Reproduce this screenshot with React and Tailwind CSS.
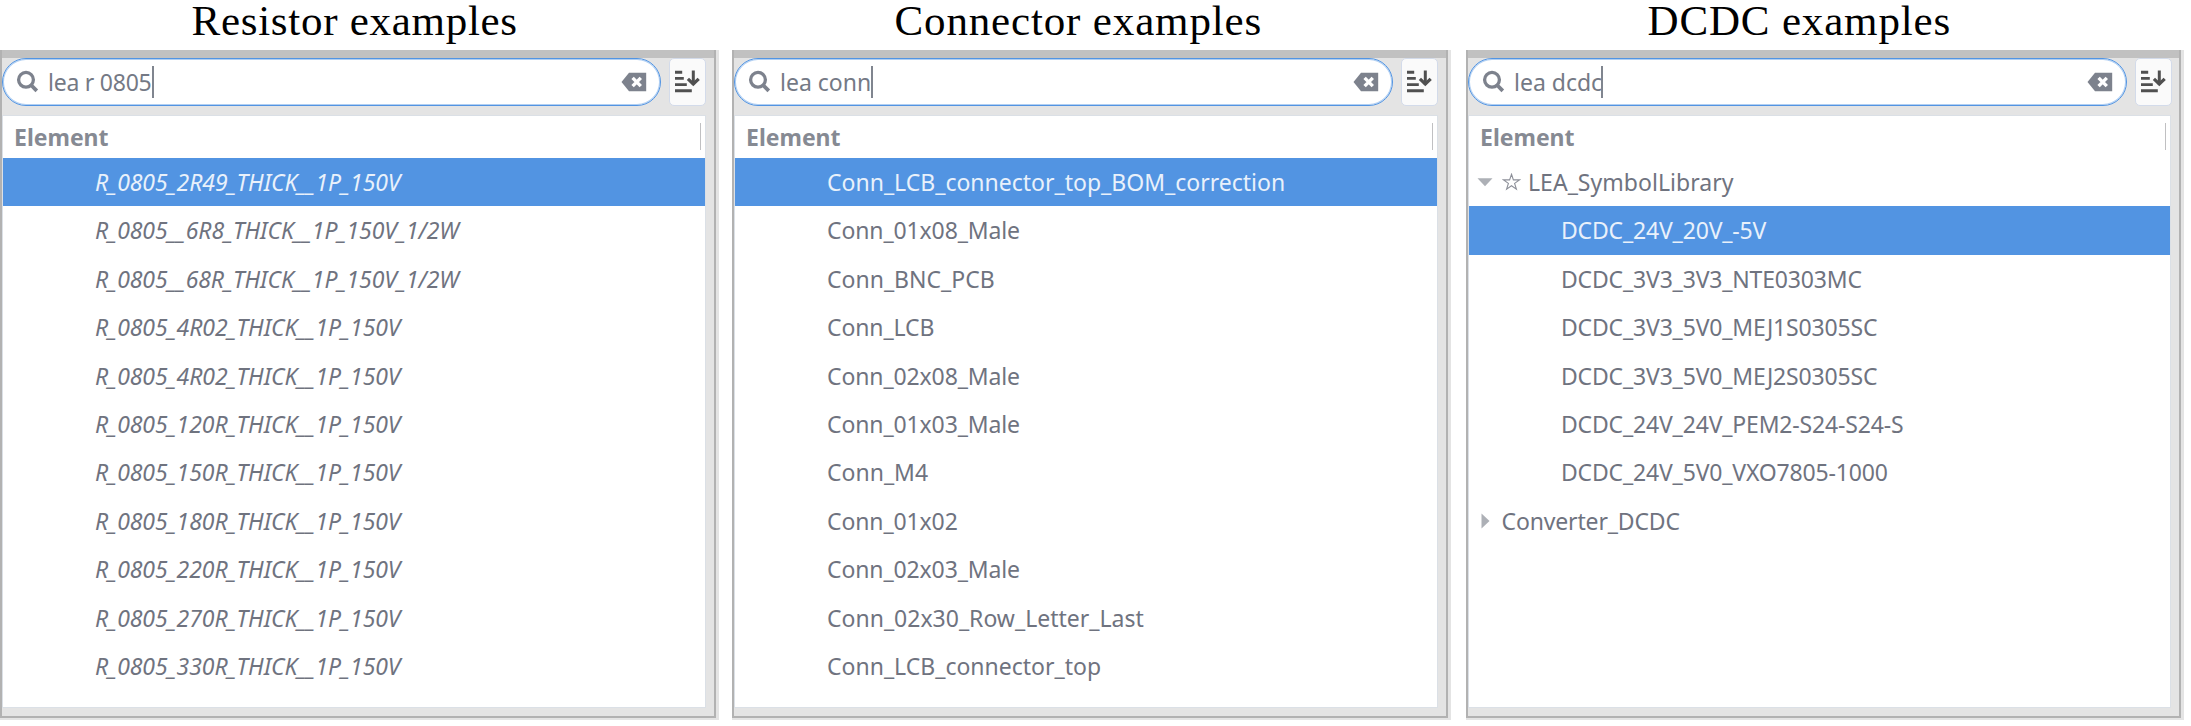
const panels = [
  {
    title: "Resistor examples",
    column: "w-[732px]",
    heading: "pl-[191.5px] tracking-[0.72px]",
    frame: "w-[719px]",
    query: "lea r 0805",
    queryClass: "tracking-[-0.24px]",
    caret: "left-[152px]",
    rows: [
      { text: "R_0805_2R49_THICK__1P_150V", selected: true },
      { text: "R_0805__6R8_THICK__1P_150V_1/2W" },
      { text: "R_0805__68R_THICK__1P_150V_1/2W" },
      { text: "R_0805_4R02_THICK__1P_150V" },
      { text: "R_0805_4R02_THICK__1P_150V" },
      { text: "R_0805_120R_THICK__1P_150V" },
      { text: "R_0805_150R_THICK__1P_150V" },
      { text: "R_0805_180R_THICK__1P_150V" },
      { text: "R_0805_220R_THICK__1P_150V" },
      { text: "R_0805_270R_THICK__1P_150V" },
      { text: "R_0805_330R_THICK__1P_150V" },
    ],
    rowClass: "italic tracking-[-0.06px]",
  },
  {
    title: "Connector examples",
    column: "w-[734px]",
    heading: "pl-[162.5px] tracking-[0.85px]",
    frame: "w-[719px]",
    query: "lea conn",
    queryClass: "",
    caret: "left-[139px]",
    rows: [
      { text: "Conn_LCB_connector_top_BOM_correction", selected: true },
      { text: "Conn_01x08_Male", tight: true },
      { text: "Conn_BNC_PCB" },
      { text: "Conn_LCB", tight: true },
      { text: "Conn_02x08_Male", tight: true },
      { text: "Conn_01x03_Male", tight: true },
      { text: "Conn_M4" },
      { text: "Conn_01x02", tight: true },
      { text: "Conn_02x03_Male", tight: true },
      { text: "Conn_02x30_Row_Letter_Last" },
      { text: "Conn_LCB_connector_top" },
    ],
    rowClass: "",
  },
  {
    title: "DCDC examples",
    column: "w-[725px]",
    heading: "pl-[181.5px] tracking-[0.84px]",
    frame: "w-[718px]",
    query: "lea dcdc",
    queryClass: "",
    caret: "left-[135px]",
    rows: [
      { text: "LEA_SymbolLibrary", kind: "open" },
      { text: "DCDC_24V_20V_-5V", selected: true },
      { text: "DCDC_3V3_3V3_NTE0303MC" },
      { text: "DCDC_3V3_5V0_MEJ1S0305SC" },
      { text: "DCDC_3V3_5V0_MEJ2S0305SC" },
      { text: "DCDC_24V_24V_PEM2-S24-S24-S" },
      { text: "DCDC_24V_5V0_VXO7805-1000" },
      { text: "Converter_DCDC", kind: "closed" },
    ],
    rowClass: "tracking-[-0.17px]",
  },
];

function SearchIcon() {
  return (
    <svg className="h-6 w-6 shrink-0" viewBox="0 0 24 24" fill="none" stroke="#7d828d">
      <circle cx="11" cy="9.8" r="7.4" strokeWidth="3.3" />
      <path d="M16 15 21.8 20.8" strokeWidth="3.8" />
    </svg>
  );
}

function ClearIcon() {
  return (
    <svg className="h-5 w-[26px] shrink-0" viewBox="0 0 26 20">
      <path d="M0.5 10 8 0.8H25.2V19.2H8Z" fill="#7d828d" />
      <path d="M11.6 5.9 19.8 14.1M19.8 5.9 11.6 14.1" stroke="#fff" strokeWidth="3.4" />
    </svg>
  );
}

function SortIcon() {
  return (
    <svg className="mr-[2px] h-6 w-[26px] shrink-0" viewBox="0 0 26 24" fill="none" stroke="#505050">
      <path d="M1 2.2H8.2M1 8.4H9.8M1 14.6H12.8M1 20.8H17.8" strokeWidth="2.9" />
      <path d="M19.3 0.5V14.5" strokeWidth="3" />
      <path d="M13.9 8.8 19.3 14 24.7 8.8" strokeWidth="3.2" />
    </svg>
  );
}

function Row({ row, className }) {
  if (row.kind === "open") {
    return (
      <div className="flex h-[48.4px] items-center pl-2 text-[#6f737f]">
        <svg className="h-4 w-4 shrink-0" viewBox="0 0 16 16">
          <path d="M0.5 4.3H15.5L8 12.2Z" fill="#adb0b6" />
        </svg>
        <svg className="ml-[9px] h-[18px] w-[19px] shrink-0" viewBox="0 0 19 18" fill="none" stroke="#8d9099">
          <path
            d="M9.5 1.3 11.4 6.9H17.4L12.6 10.4 14.4 16.2 9.5 12.7 4.6 16.2 6.4 10.4 1.6 6.9H7.6Z"
            strokeWidth="1.1"
          />
        </svg>
        <span className="ml-[7px] tracking-[0.03px]">{row.text}</span>
      </div>
    );
  }
  if (row.kind === "closed") {
    return (
      <div className="flex h-[48.4px] items-center pl-3 text-[#6f737f]">
        <svg className="h-4 w-[9px] shrink-0" viewBox="0 0 9 16">
          <path d="M0.5 0.5V15.5L8.5 8Z" fill="#adb0b6" />
        </svg>
        <span className="ml-[11.5px] tracking-[-0.15px]">{row.text}</span>
      </div>
    );
  }
  return (
    <div
      className={`flex h-[48.4px] items-center pl-[92px] ${className} ${
        row.tight ? "tracking-[-0.12px]" : ""
      } ${row.selected ? "bg-[#5294e2] text-[#e9f1fb]" : "text-[#6f737f]"}`}
    >
      {row.text}
    </div>
  );
}

function Panel({ panel }) {
  return (
    <section className={`shrink-0 ${panel.column}`}>
      <h2
        className={`h-[50px] font-['Liberation_Serif',serif] text-[43px] leading-[42px] text-black ${panel.heading}`}
      >
        {panel.title}
      </h2>
      <div className={`relative h-[670px] border-r-[3px] border-b-2 border-[#e4e4e4] ${panel.frame}`}>
        <div className="flex h-full flex-col border-x-2 border-b-2 border-[#b2b2b2] bg-[#e4e4e4]">
          <div className="h-2 shrink-0 bg-[#c1c1c1]" />
          <div className="flex h-12 shrink-0">
            <div className="flex w-[659px] items-center rounded-full border border-[#5294e2] bg-white pr-[13px] pl-3 text-[#747985] shadow-[inset_0_0_0_1px_rgba(82,148,226,0.45)]">
              <SearchIcon />
              <span className={`ml-[9px] flex-1 ${panel.queryClass}`}>{panel.query}</span>
              <ClearIcon />
            </div>
            <div className="ml-2 flex h-12 w-[37px] items-center justify-center rounded-[5px] border border-[#d3dbea] bg-[#fafafa]">
              <SortIcon />
            </div>
          </div>
          <div className={`absolute top-4 h-8 w-[2px] bg-[#80858f] ${panel.caret}`} />
          <div className="mt-[9px] mr-2 flex h-[593px] flex-col border border-[#dbe0e6] bg-white">
            <div className="flex h-[41.8px] shrink-0 items-center justify-between pr-1 pl-[11px] font-bold text-[#868a93]">
              <span>Element</span>
              <span className="h-[27px] w-px bg-[#c0c0c2]" />
            </div>
            {panel.rows.map((row, i) => (
              <Row key={i} row={row} className={panel.rowClass} />
            ))}
          </div>
        </div>
      </div>
    </section>
  );
}

export default function App() {
  return (
    <main className="flex h-[726px] w-[2191px] overflow-hidden bg-white font-['Noto_Sans',sans-serif] text-[23px] leading-[32px] whitespace-nowrap">
      {panels.map((panel) => (
        <Panel key={panel.title} panel={panel} />
      ))}
    </main>
  );
}
